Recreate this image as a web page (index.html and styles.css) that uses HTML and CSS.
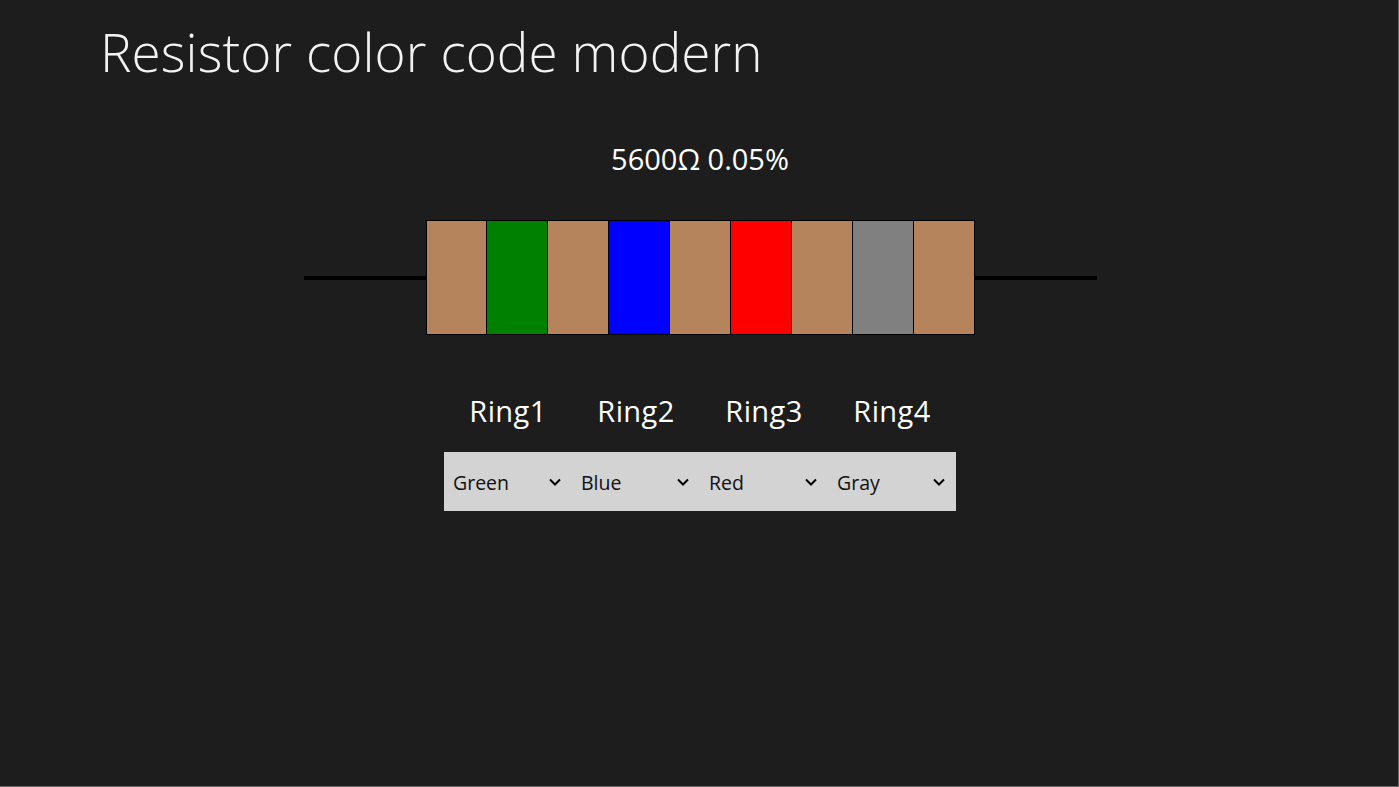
FILE: index.html
```html
<!DOCTYPE html>
<html>
<head>
<meta charset="utf-8">
<link rel="stylesheet" href="styles.css">
</head>
<body>
<div class="page">
  <h1 class="title">Resistor color code modern</h1>
  <div class="main">
    <div class="value">5600Ω 0.05%</div>
    <div class="resistor">
      <div class="lead"></div>
      <div class="body">
        <div class="band brown"></div>
        <div class="band green"></div>
        <div class="band brown"></div>
        <div class="band blue"></div>
        <div class="band brown"></div>
        <div class="band red"></div>
        <div class="band brown"></div>
        <div class="band gray"></div>
        <div class="band brown"></div>
      </div>
      <div class="lead"></div>
    </div>
    <div class="labels">
      <div class="label">Ring1</div>
      <div class="label">Ring2</div>
      <div class="label">Ring3</div>
      <div class="label">Ring4</div>
    </div>
    <div class="selects">
      <div class="select"><span>Green</span><svg class="chev" width="12" height="8" viewBox="0 0 12 8"><path d="M1 1.5 L6 6.5 L11 1.5" fill="none" stroke="#000" stroke-width="2"/></svg></div>
      <div class="select"><span>Blue</span><svg class="chev" width="12" height="8" viewBox="0 0 12 8"><path d="M1 1.5 L6 6.5 L11 1.5" fill="none" stroke="#000" stroke-width="2"/></svg></div>
      <div class="select"><span>Red</span><svg class="chev" width="12" height="8" viewBox="0 0 12 8"><path d="M1 1.5 L6 6.5 L11 1.5" fill="none" stroke="#000" stroke-width="2"/></svg></div>
      <div class="select"><span>Gray</span><svg class="chev" width="12" height="8" viewBox="0 0 12 8"><path d="M1 1.5 L6 6.5 L11 1.5" fill="none" stroke="#000" stroke-width="2"/></svg></div>
    </div>
  </div>
</div>
</body>
</html>
```
FILE: styles.css
```css
html, body {
  margin: 0;
  padding: 0;
}
body {
  background: #1d1d1d;
  font-family: "Open Sans", "Noto Sans", sans-serif;
  color: #ffffff;
}
.page {
  width: 1399px;
  height: 787px;
  box-sizing: border-box;
  border-right: 1px solid #6a6a6a;
  border-bottom: 1px solid #6a6a6a;
  overflow: hidden;
}
.title {
  margin: 0;
  padding: 16px 0 0 100px;
  font-size: 53px;
  font-weight: 300;
  line-height: 72px;
  letter-spacing: 0.1px;
  color: #f2f2f2;
}
.main {
  display: flex;
  flex-direction: column;
  align-items: center;
  margin-left: 2px;
}
.value {
  margin-top: 52px;
  font-size: 29px;
  line-height: 38px;
  letter-spacing: 0;
}
.resistor {
  margin-top: 42px;
  display: flex;
  align-items: center;
}
.lead {
  width: 122px;
  height: 4px;
  background: #000;
}
.body {
  width: 549px;
  height: 115px;
  box-sizing: border-box;
  border: 1px solid #000;
  background: #000;
  display: flex;
  gap: 1px;
}
.band {
  flex: 1;
}
.brown { background: #b5835c; }
.green { background: #008000; }
.blue { background: #0000ff; }
.red { background: #ff0000; }
.gray { background: #808080; }
.labels {
  margin-top: 56px;
  display: flex;
}
.label {
  width: 128px;
  text-align: center;
  font-size: 29px;
  line-height: 40px;
  letter-spacing: 0.4px;
}
.selects {
  margin-top: 21px;
  display: flex;
  background: #d3d3d3;
}
.select {
  width: 128px;
  height: 59px;
  box-sizing: border-box;
  padding: 0 11px 0 9px;
  display: flex;
  align-items: center;
  justify-content: space-between;
  color: #111;
  font-size: 19.5px;
  letter-spacing: 0;
}
.select span {
  margin-top: 2px;
}
.chev {
  display: block;
}
```
